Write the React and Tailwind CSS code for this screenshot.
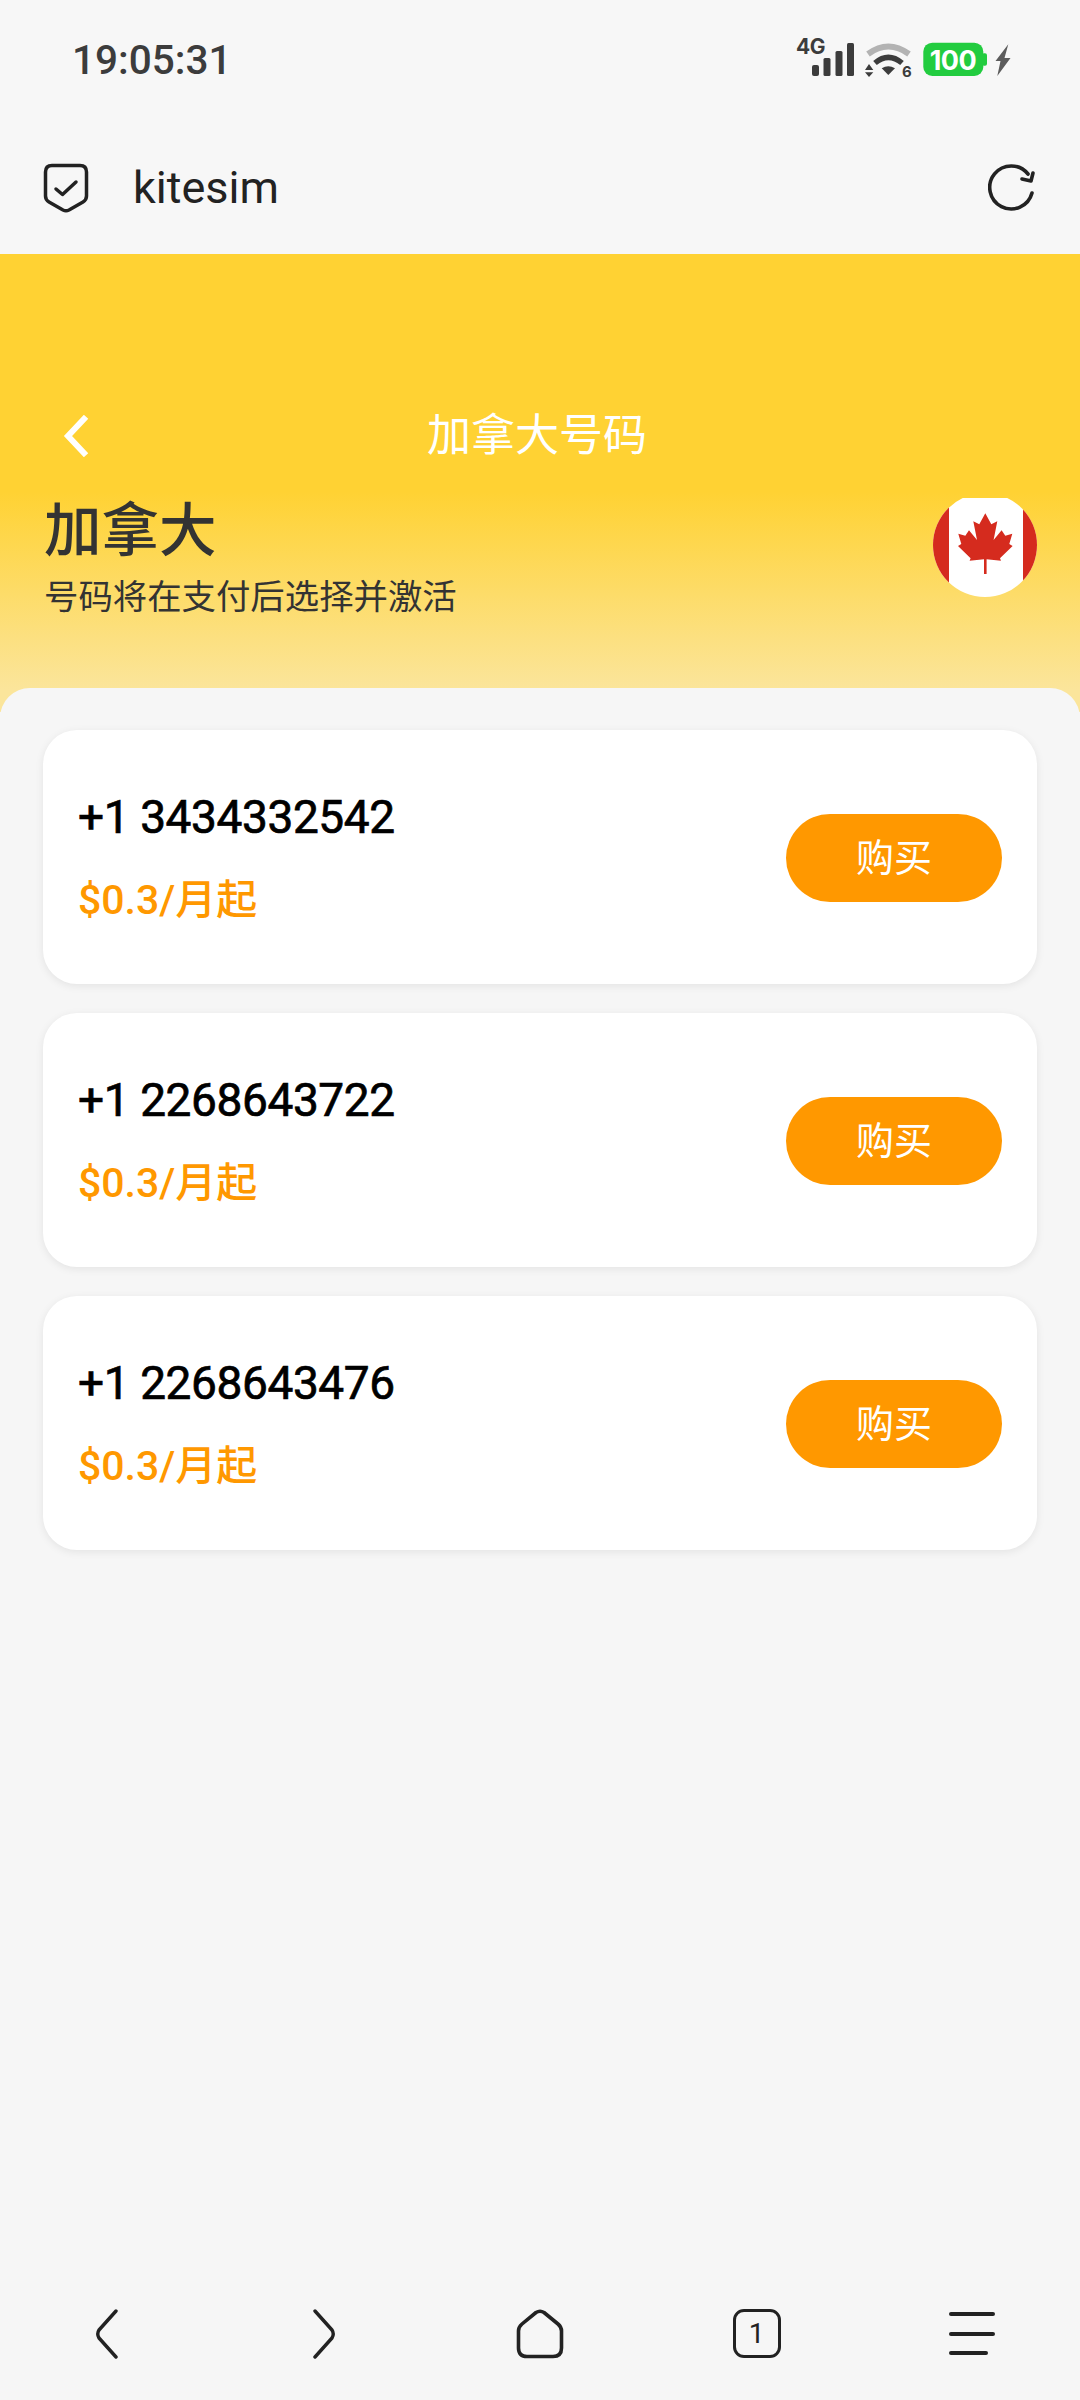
import React from "react";

const NUMBERS = ["+1 3434332542", "+1 2268643722", "+1 2268643476"];

function StatusIcons() {
  return (
    <svg width="216" height="51" viewBox="0 0 216 51" className="block">
      {/* 4G + bars */}
      <text x="0" y="20" fontSize="21" fontWeight="700" fill="#3c3c3c" fontFamily="Inter, sans-serif" letterSpacing="-0.5">4G</text>
      <rect x="16" y="31" width="7" height="11" rx="2" fill="#3c3c3c" />
      <rect x="27.500" y="24" width="7" height="18" rx="1.500" fill="#3c3c3c" />
      <rect x="39.500" y="17" width="7" height="25" rx="1.500" fill="#3c3c3c" />
      <rect x="51" y="9" width="7" height="33" rx="1.500" fill="#3c3c3c" />
      {/* wifi */}
      <path d="M72 20 Q92.300 5 113 20" fill="none" stroke="#b3b3b3" strokeWidth="6" />
      <path d="M79 29 Q92.300 17.600 106 29" fill="none" stroke="#3c3c3c" strokeWidth="5.500" />
      <path d="M85.700 34.300 Q92.300 30 99 34.300 L92.300 41 Z" fill="#3c3c3c" />
      <path d="M69 36 L73 30 L77.300 36 Z M69 38.300 L77.300 38.300 L73 43 Z" fill="#3c3c3c" />
      <text x="106" y="43.300" fontSize="15" fontWeight="700" fill="#3c3c3c" fontFamily="Inter, sans-serif">6</text>
      {/* battery */}
      <rect x="127.300" y="8.700" width="60" height="33.300" rx="9" fill="#22cc3f" />
      <rect x="186" y="19.300" width="5" height="12.400" rx="2" fill="#22cc3f" />
      <text x="157" y="36" fontSize="27" fontWeight="700" fill="#fff" textAnchor="middle" fontFamily="Inter, sans-serif" letterSpacing="-0.5">100</text>
      {/* bolt */}
      <path d="M212.300 10.300 L199.500 27 L204.500 27 L201.300 42 L214.500 24 L208.500 24 Z" fill="#5c5c5c" />
    </svg>
  );
}

function ShieldIcon() {
  return (
    <svg width="46" height="50" viewBox="0 0 46 50" fill="none" stroke="#222" strokeWidth="3.500" strokeLinecap="round" strokeLinejoin="round">
      <path d="M9 2.500 H37 Q43.500 2.500 43.500 9 V33 Q43.500 37 40 39 L26 47 Q23 48.500 20 47 L6 39 Q2.500 37 2.500 33 V9 Q2.500 2.500 9 2.500 Z" />
      <path d="M13 26 L19.500 31.500 L33 19" />
    </svg>
  );
}

function RefreshIcon() {
  return (
    <svg width="48" height="48" viewBox="0 0 48 48" fill="none" stroke="#222" strokeWidth="3.600" strokeLinecap="round" strokeLinejoin="round">
      <path d="M44 29 A21.500 21.500 0 1 1 40 10" />
      <path d="M45 9 L43 17 L34 15" />
    </svg>
  );
}

function CanadaFlag() {
  const cx = 52.3;
  const right = [
    [0, 15.3], [6, 26.3], [12, 23.3], [8.3, 42], [16.3, 32.3], [20, 37.7], [27, 35.7],
    [24, 46], [27.3, 48], [14.7, 60.3], [15.7, 62.7], [1.3, 61.3], [1.3, 76],
  ];
  const left = [...right].reverse().map(([dx, y]) => [-dx, y]);
  const pts = [...right, ...left].map(([dx, y]) => `${cx + dx},${y}`).join(" ");
  return (
    <svg width="104" height="99" viewBox="0 0 104 99" className="block shrink-0">
      <defs>
        <clipPath id="flagClip">
          <circle cx="52" cy="47" r="52" />
        </clipPath>
      </defs>
      <g clipPath="url(#flagClip)">
        <rect x="0" y="0" width="104" height="99" fill="#fff" />
        <rect x="0" y="0" width="16" height="99" fill="#d52b1e" />
        <rect x="90" y="0" width="14" height="99" fill="#d52b1e" />
        <polygon points={pts} fill="#d52b1e" />
      </g>
    </svg>
  );
}

function NumberCard({ number }) {
  return (
    <div className="flex h-[254px] items-center justify-between rounded-[34px] bg-white px-[35px] pt-[2px] shadow-[0_2px_8px_rgba(0,0,0,0.08)]">
      <div>
        <div className="text-[46px] leading-[56px] tracking-[-0.4px] text-black [-webkit-text-stroke:0.7px_black]">{number}</div>
        <div className="mt-[27px] text-[41px] leading-[56px] font-medium text-[#ff9800]">$0.3/月起</div>
      </div>
      <button className="flex h-[88px] w-[216px] items-center justify-center rounded-full bg-[#ff9800] text-[38px] text-white">
        购买
      </button>
    </div>
  );
}

export default function App() {
  return (
    <div className="flex h-[2400px] w-[1080px] flex-col overflow-hidden bg-[#f7f7f7] font-['Roboto','Noto_Sans_CJK_SC',sans-serif]">
      {/* status bar + browser address bar */}
      <div className="h-[254px] shrink-0">
        <div className="flex h-[85px] items-end justify-between pl-[72px] pr-[68px]">
          <span className="text-[40.500px] leading-[50px] font-medium text-[#3c3c3c]">19:05:31</span>
          <StatusIcons />
        </div>
        <div className="flex h-[169px] items-center justify-between pl-[43px] pr-[44px] pt-[37px]">
          <div className="flex items-center gap-[44px]">
            <ShieldIcon />
            <span className="text-[45px] leading-[56px] font-normal text-[#222]">kitesim</span>
          </div>
          <RefreshIcon />
        </div>
      </div>

      {/* yellow header */}
      <div className="h-[458px] shrink-0 bg-[linear-gradient(180deg,#ffd233_0%,#ffd233_52%,#fbe59b_95%)] pt-[152px]">
        <div className="relative flex h-[60px] items-center pl-[62px]">
          <svg width="28" height="42" viewBox="0 0 28 42" fill="none" stroke="#fff" strokeWidth="6" strokeLinecap="square">
            <path d="M22 4 L6 21 L22 38" />
          </svg>
          <span className="absolute left-[427px] text-[44px] leading-[60px] text-white">加拿大号码</span>
        </div>
        <div className="mt-[32px] flex items-start justify-between pl-[44px] pr-[43px]">
          <div>
            <div className="pt-[1px] text-[57.500px] leading-[66px] font-medium text-[#333]">加拿大</div>
            <div className="mt-[10px] text-[34.400px] leading-[44px] text-[#333]">号码将在支付后选择并激活</div>
          </div>
          <CanadaFlag />
        </div>
      </div>

      {/* sheet with the numbers */}
      <div className="-mt-[24px] flex flex-1 flex-col gap-[29px] rounded-t-[30px] bg-[#f6f6f6] px-[43px] pt-[42px]">
        {NUMBERS.map((n) => (
          <NumberCard key={n} number={n} />
        ))}
      </div>

      {/* browser bottom bar */}
      <div className="flex h-[110px] shrink-0 items-start justify-between bg-[#f6f6f6] px-[83px] pt-[19px]">
        <div className="flex w-[48px] justify-center">
          <svg width="24" height="50" viewBox="0 0 24 50" fill="none" stroke="#222" strokeWidth="3.400" strokeLinecap="round" strokeLinejoin="round">
            <path d="M21 2 L4 21 Q1.500 25 4 29 L21 48" />
          </svg>
        </div>
        <div className="flex w-[48px] justify-center">
          <svg width="24" height="50" viewBox="0 0 24 50" fill="none" stroke="#222" strokeWidth="3.400" strokeLinecap="round" strokeLinejoin="round">
            <path d="M3 2 L20 21 Q22.500 25 20 29 L3 48" />
          </svg>
        </div>
        <div className="flex w-[48px] justify-center">
          <svg width="48" height="50" viewBox="0 0 48 50" fill="none" stroke="#222" strokeWidth="3.600" strokeLinecap="round" strokeLinejoin="round">
            <path d="M20 3.500 Q24 1 28 3.500 L42 15 Q45.500 18 45.500 22 V39 Q45.500 47.500 37 47.500 H11 Q2.500 47.500 2.500 39 V22 Q2.500 18 6 15 Z" />
          </svg>
        </div>
        <div className="flex h-[49px] w-[48px] items-center justify-center rounded-[11px] border-[3.500px] border-[#222] text-[28px] leading-none text-[#222]">
          1
        </div>
        <div className="flex w-[48px] flex-col gap-[15.500px] pt-[3px]">
          <div className="h-[4px] w-[46px] rounded-full bg-[#222]" />
          <div className="h-[4px] w-[46px] rounded-full bg-[#222]" />
          <div className="h-[4px] w-[39px] rounded-full bg-[#222]" />
        </div>
      </div>
    </div>
  );
}
